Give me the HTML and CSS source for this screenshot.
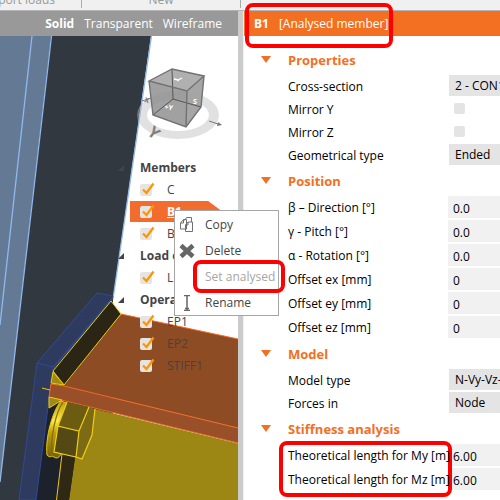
FILE: index.html
```html
<!DOCTYPE html>
<html lang="en">
<head>
    <meta charset="UTF-8">
    <meta name="viewport" content="width=device-width, initial-scale=1.0">
    <title>Connection editor</title>
    <link rel="stylesheet" href="styles.css">
</head>
<body>
    <svg class="symbols" aria-hidden="true">
        <symbol id="tick" viewBox="0 0 14 14">
            <path d="M2 7.5 L5.5 11 L12.5 1.5" fill="none" stroke="#ff9500" stroke-width="2.2"/>
        </symbol>
    </svg>

    <div class="ribbon">
        <div class="ribbon-group ribbon-export">Export loads</div>
        <div class="ribbon-group ribbon-new">New</div>
    </div>

    <main class="workspace">
        <section class="view">
            <div class="view-modes">
                <button class="mode active">Solid</button>
                <button class="mode">Transparent</button>
                <button class="mode">Wireframe</button>
            </div>

            <div class="canvas">
                <svg class="scene" viewBox="0 36 238 464" preserveAspectRatio="xMinYMin slice">
                    <defs>
                        <linearGradient id="washer" x1="0" y1="0" x2="0" y2="1">
                            <stop offset="0" stop-color="#b89a0c"/>
                            <stop offset="0.35" stop-color="#ffe94a"/>
                            <stop offset="0.55" stop-color="#c09f08"/>
                            <stop offset="1" stop-color="#6f5f0e"/>
                        </linearGradient>
                    </defs>

                    <!-- column -->
                    <polygon points="0,36 151,36 113,299 113,500 0,500" fill="#323840"/>
                    <polygon points="0,36 51,36 0,482" fill="#647a94"/>
                    <path d="M151.500 36 L113 299 M51.500 36 L0 482 M32 36 L0 325" fill="none" stroke="#8fb8ee" stroke-width="1.300"/>

                    <!-- end plate -->
                    <polygon points="48,405 66,400 76,458 69,500 35,500" fill="#1d212c"/>
                    <polygon points="97,293 113,296 111,302 53,368 36,500 19,500 37,363" fill="#2e3a5e" stroke="#2f4a96"/>
                    <path d="M37 363 L53 367 L113 297" fill="none" stroke="#2f4a96"/>

                    <!-- beam flange -->
                    <polygon points="121,314 238,339 238,428 64,386" fill="#8e4c25"/>
                    <polygon points="51,384 64,386 238,428 238,443 49,397" fill="#995029"/>
                    <path d="M121 314 L238 339 M51 384 L64 386 L238 428 M51 384 L49 397 L238 443" fill="none" stroke="#f26a25"/>

                    <!-- beam web -->
                    <polygon points="95,409 238,443.500 238,500 69,500 75,458" fill="#9c8715"/>
                    <polygon points="62,454 75,457 69,500 57,500" fill="#2e2815"/>
                    <path d="M62 454 L56.500 500" stroke="#eccb0c"/>

                    <!-- weld and stiffener -->
                    <polygon points="111,301 121,314 64,385 53,371" fill="#2a2515" stroke="#eccb0c"/>
                    <polygon points="53,372 64,385 51,383" fill="#a08a14" stroke="#eccb0c"/>
                    <polygon points="49,397 62,400 49,408" fill="#a08a14" stroke="#eccb0c"/>
                    <path d="M42 388 L50 390" stroke="#eccb0c"/>

                    <!-- bolt -->
                    <path d="M61 401 C53 410 45 437 47 455 Q49 458 52 456 L54 457 Q58 460 61 454 L55 451 L58 426 L67 403 Z" fill="url(#washer)" stroke="#e8c60a"/>
                    <path d="M63 402 C56 412 50 437 52 456" fill="none" stroke="#806c0d" stroke-width="1.200"/>
                    <polygon points="67,402 89,407 79,431 58,426" fill="#6b5c12"/>
                    <polygon points="58,426 79,431 76,457 54,452" fill="#544914"/>
                    <polygon points="89,407 95,409 92,435 82,459 76,457 79,431" fill="#7c6b14"/>
                    <path d="M67 402 L58 426 L79 431 L89 407 M58 426 L54 452 L76 457 L79 431 M95 409 L92 435 L82 459 L76 457" fill="none" stroke="#f0cf10" stroke-width="1.200"/>

                    <!-- view cube -->
                    <path d="M137 115 A41 24 0 1 0 219 115 A41 24 0 1 0 137 115 M147 115 A31 16 0 1 1 209 115 A31 16 0 1 1 147 115" fill="#bdbdbd" fill-opacity="0.450" fill-rule="evenodd"/>
                    <polygon points="149,81 172,69 204,76 201,107 186,127 153,115" fill="#909090" fill-opacity="0.850"/>
                    <polygon points="149,81 172,69 204,76 187,91" fill="#b4b4b4" fill-opacity="0.800"/>
                    <polygon points="187,91 204,76 201,107 186,127" fill="#a8a8a8" fill-opacity="0.700"/>
                    <path d="M172 69 L173 99 L153 115 M173 99 L201 107" fill="none" stroke="#555"/>
                    <path d="M149 81 L172 69 L204 76 L187 91 Z M149 81 L153 115 L186 127 L201 107 L204 76 M187 91 L186 127" fill="none" stroke="#727272" stroke-width="1.400"/>
                    <path d="M174 79 L178 80 L182 78 M177 80 L179 81" fill="none" stroke="#fff" stroke-width="1.300"/>
                    <path d="M209 121 L218 124 M142 101 L151 98" stroke="#777"/>
                    <polygon points="218,122 222,125 217,126" fill="#777"/>
                    <text class="cube-face" x="164" y="109" transform="rotate(12 164 109)">+Y</text>
                    <text class="cube-face" x="193" y="104">S</text>
                    <text class="axis-small" x="144" y="102" transform="rotate(15 144 102)">X</text>
                    <text class="axis-large" x="148" y="138" transform="rotate(40 153 134)">Y</text>
                </svg>

                <ul class="tree">
                    <li class="tree-group">Members</li>
                    <li class="tree-item"><label><span class="tick-box"><input type="checkbox" checked><svg><use href="#tick"/></svg></span>C</label></li>
                    <li class="tree-item selected"><label><span class="tick-box"><input type="checkbox" checked><svg><use href="#tick"/></svg></span><u>B1</u></label></li>
                    <li class="tree-item"><label><span class="tick-box"><input type="checkbox" checked><svg><use href="#tick"/></svg></span>B2</label></li>
                    <li class="tree-group">Load effects</li>
                    <li class="tree-item"><label><span class="tick-box"><input type="checkbox" checked><svg><use href="#tick"/></svg></span>LE1</label></li>
                    <li class="tree-group">Operations</li>
                    <li class="tree-item"><label><span class="tick-box"><input type="checkbox" checked><svg><use href="#tick"/></svg></span>EP1</label></li>
                    <li class="tree-item"><label><span class="tick-box"><input type="checkbox" checked><svg><use href="#tick"/></svg></span>EP2</label></li>
                    <li class="tree-item"><label><span class="tick-box"><input type="checkbox" checked><svg><use href="#tick"/></svg></span>STIFF1</label></li>
                </ul>
            </div>
        </section>

        <div class="splitter"></div>

        <section class="properties">
            <header class="properties-header">
                <strong>B1</strong>
                <span class="member-state">[Analysed member]</span>
                <span class="callout callout-header"></span>
            </header>

            <div class="properties-body">
                <section class="group">
                    <h2>Properties</h2>
                    <div class="row compact">
                        <label for="cross-section">Cross-section</label>
                        <select id="cross-section"><option>2 - CON1(Iw)</option></select>
                    </div>
                    <div class="row compact">
                        <label for="mirror-y">Mirror Y</label>
                        <input type="checkbox" id="mirror-y">
                    </div>
                    <div class="row compact">
                        <label for="mirror-z">Mirror Z</label>
                        <input type="checkbox" id="mirror-z">
                    </div>
                    <div class="row compact">
                        <label for="geometrical-type">Geometrical type</label>
                        <select id="geometrical-type"><option>Ended</option></select>
                    </div>
                </section>

                <section class="group">
                    <h2>Position</h2>
                    <div class="row">
                        <label for="direction">β – Direction [°]</label>
                        <input type="text" id="direction" value="0.0">
                    </div>
                    <div class="row">
                        <label for="pitch">γ - Pitch [°]</label>
                        <input type="text" id="pitch" value="0.0">
                    </div>
                    <div class="row">
                        <label for="rotation">α - Rotation [°]</label>
                        <input type="text" id="rotation" value="0.0">
                    </div>
                    <div class="row">
                        <label for="offset-x">Offset ex [mm]</label>
                        <input type="text" id="offset-x" value="0">
                    </div>
                    <div class="row">
                        <label for="offset-y">Offset ey [mm]</label>
                        <input type="text" id="offset-y" value="0">
                    </div>
                    <div class="row">
                        <label for="offset-z">Offset ez [mm]</label>
                        <input type="text" id="offset-z" value="0">
                    </div>
                </section>

                <section class="group">
                    <h2>Model</h2>
                    <div class="row compact">
                        <label for="model-type">Model type</label>
                        <select id="model-type"><option>N-Vy-Vz-Mx-My-Mz</option></select>
                    </div>
                    <div class="row compact">
                        <label for="forces-in">Forces in</label>
                        <select id="forces-in"><option>Node</option></select>
                    </div>
                </section>

                <section class="group">
                    <h2>Stiffness analysis</h2>
                    <div class="row">
                        <label for="length-my">Theoretical length for My [m]</label>
                        <input type="text" id="length-my" value="6.00">
                    </div>
                    <div class="row">
                        <label for="length-mz">Theoretical length for Mz [m]</label>
                        <input type="text" id="length-mz" value="6.00">
                    </div>
                    <span class="callout callout-lengths"></span>
                </section>
            </div>
        </section>

        <div class="context-menu">
            <button>
                <svg viewBox="0 0 16 16"><path d="M5.500 3.500 L7.500 0.500 H12.500 V5 M1.500 6 L4.500 2.500 H7.500 V12 H1.500 Z M1.500 6 H4.500 V2.500 M6.500 8 L9 5 H13.500 V14.500 H6.500 Z M6.500 8 H9 V5" fill="#fff" stroke="#707070"/></svg>
                Copy
            </button>
            <button>
                <svg viewBox="0 0 16 16"><path d="M2 2.500 L14 13.500 M14 2.500 L2 13.500" stroke="#666" stroke-width="4.500"/></svg>
                Delete
            </button>
            <button disabled>
                <svg viewBox="0 0 16 16"></svg>
                Set analysed
                <span class="callout callout-menu"></span>
            </button>
            <button>
                <svg viewBox="0 0 16 16"><path d="M5 0.500 H11 M5 15.500 H11 M8 0 V16 M6 13.500 H10" stroke="#666" stroke-width="1.500"/></svg>
                Rename
            </button>
        </div>
    </main>
</body>
</html>
```
FILE: styles.css
```css
* {
    margin: 0;
    padding: 0;
    box-sizing: border-box;
}

body {
    display: flex;
    flex-direction: column;
    height: 100vh;
    overflow: hidden;
    background-color: #fff;
    color: #000;
    font-family: "Open Sans", "Noto Sans", sans-serif;
    font-size: 12px;
    line-height: 16px;
}

button, input, select {
    border: none;
    border-radius: 0;
    background: none;
    color: inherit;
    font: inherit;
    appearance: none;
}

.symbols {
    position: absolute;
    width: 0;
    height: 0;
}

/* Ribbon */
.ribbon {
    display: flex;
    height: 11px;
    padding-bottom: 2px;
    overflow: hidden;
    background-color: #f0f0f0;
    border-bottom: 1px solid #b4b4b4;
    color: #999;
}

.ribbon-group {
    display: flex;
    align-items: flex-end;
    border-right: 1px solid #aaa;
    white-space: nowrap;
}

.ribbon-export {
    justify-content: flex-end;
    width: 82px;
    padding-right: 26px;
}

.ribbon-new {
    justify-content: center;
    width: 159px;
}

/* Workspace */
.workspace {
    position: relative;
    display: grid;
    grid-template-columns: 238px 6px minmax(0, 1fr);
    flex: 1;
    min-height: 0;
}

.view {
    display: flex;
    flex-direction: column;
    min-width: 0;
}

.view-modes {
    display: flex;
    justify-content: flex-end;
    gap: 10px;
    height: 25px;
    padding-right: 16px;
    background-color: #999;
    color: #fff;
}

.mode.active {
    font-weight: 700;
}

.canvas {
    position: relative;
    flex: 1;
    overflow: hidden;
}

.scene {
    display: block;
    width: 100%;
    height: 100%;
}

.cube-face {
    fill: #fff;
    font-size: 7px;
    font-weight: 700;
}

.axis-small {
    fill: #777;
    font-size: 7px;
    font-weight: 700;
}

.axis-large {
    fill: #808080;
    font-size: 16px;
    font-weight: 700;
}

.splitter {
    background-color: #cbcbcb;
    border-right: 1px solid #f0f0f0;
}

/* Scene tree */
.tree {
    position: absolute;
    top: 121px;
    left: 130px;
    list-style: none;
    color: #444;
    line-height: 22px;
}

.tree-group {
    position: relative;
    padding-left: 10px;
    font-weight: 700;
}

.tree-group::before {
    content: "";
    position: absolute;
    top: 8px;
    left: -12px;
    border-bottom: 6px solid #444;
    border-left: 6px solid transparent;
}

.tree-item {
    width: 93px;
    height: 22px;
    padding-left: 10px;
}

.tree-item label {
    display: flex;
    align-items: center;
    gap: 13px;
}

.tree-item.selected {
    background-color: #f26c2f;
    clip-path: polygon(0 0, 84% 0, 100% 50%, 84% 96%, 0 96%);
    color: #fff;
    font-weight: 700;
}

.tick-box {
    position: relative;
    display: flex;
    width: 14px;
}

.tick-box input {
    width: 12px;
    height: 12px;
    background-color: #e4e4e4;
    border-radius: 2px;
}

.tick-box svg {
    position: absolute;
    top: -2px;
    left: 1px;
    width: 14px;
    height: 14px;
    pointer-events: none;
}

/* Properties panel */
.properties {
    min-width: 0;
}

.properties-header {
    position: relative;
    display: flex;
    align-items: center;
    gap: 10px;
    height: 25px;
    padding-left: 10px;
    background-color: #f36f21;
    color: #fff;
}

.member-state {
    z-index: 1;
}

.properties-body {
    padding-top: 11px;
}

.group {
    position: relative;
    padding: 0 0 2px 44px;
}

.group h2 {
    position: relative;
    margin-bottom: 1px;
    color: #f36f21;
    font-size: 13px;
    font-weight: 700;
    line-height: 26px;
}

.group h2::before {
    content: "";
    position: absolute;
    top: 9px;
    left: -27px;
    border-top: 7px solid #f36f21;
    border-right: 5px solid transparent;
    border-left: 5px solid transparent;
}

.row {
    display: grid;
    grid-template-columns: 160px minmax(0, 1fr);
    align-items: center;
    height: 24px;
    white-space: nowrap;
}

.row.compact {
    height: 23px;
}

.row label {
    z-index: 1;
    padding-top: 2px;
}

.row input[type="text"] {
    width: 100%;
    height: 22px;
    padding-top: 2px;
    padding-left: 5px;
    background-color: #f1f1f1;
}

.row select {
    height: 21px;
    margin-left: 1px;
    padding-top: 1px;
    padding-left: 6px;
    background-color: #e4e4e4;
}

.row input[type="checkbox"] {
    width: 11px;
    height: 11px;
    margin-left: 6px;
    background-color: #e4e4e4;
    border-radius: 2px;
}

/* Context menu */
.context-menu {
    position: absolute;
    z-index: 2;
    top: 199px;
    left: 174px;
    width: 105px;
    background-color: #fff;
    border: 1px solid #a6a6a6;
    color: #444;
}

.context-menu button {
    position: relative;
    display: flex;
    align-items: center;
    gap: 10px;
    width: 100%;
    height: 26px;
    padding-top: 2px;
    padding-left: 4px;
    white-space: nowrap;
}

.context-menu button:disabled {
    color: #a6a6a6;
}

.context-menu svg {
    flex: none;
    width: 16px;
    height: 16px;
}

/* Callouts */
.callout {
    position: absolute;
    border: 4px solid #f00;
    border-radius: 8px;
    pointer-events: none;
}

.callout-header {
    top: -8px;
    left: 1px;
    width: 148px;
    height: 45px;
}

.callout-lengths {
    top: 25px;
    left: 35px;
    width: 173px;
    height: 56px;
}

.callout-menu {
    top: -3px;
    left: 18px;
    width: 92px;
    height: 33px;
}
```
